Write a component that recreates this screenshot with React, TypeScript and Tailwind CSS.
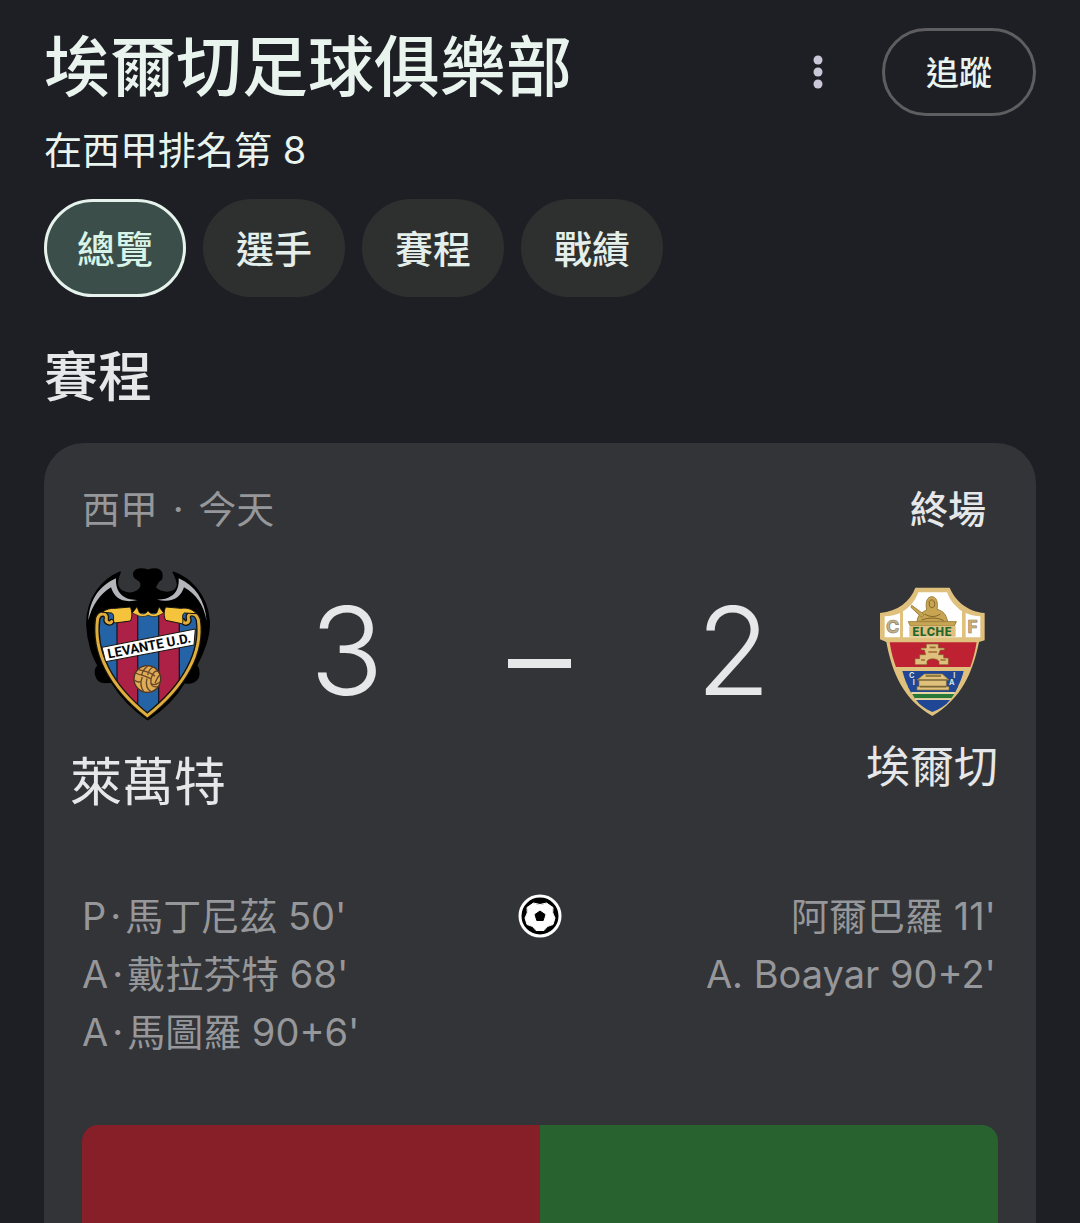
import React from 'react';

const tabs = ['總覽', '選手', '賽程', '戰績'];

const homeGoals = [
  { initial: 'P', name: "馬丁尼茲 50'" },
  { initial: 'A', name: "戴拉芬特 68'" },
  { initial: 'A', name: "馬圖羅 90+6'" },
];
const awayGoals = ["阿爾巴羅 11'", "A. Boayar 90+2'"];

function LevanteCrest() {
  return (
    <svg viewBox="48 36 378 462" className="h-[154px] w-[126px]" role="img" aria-label="Levante U.D.">
      <defs>
        <clipPath id="levante-shield">
          <path d="M84 200C84 180 100 170 128 174L345 174C374 168 392 180 392 210C392 300 352 388 235 480C128 392 84 300 84 200Z" />
        </clipPath>
      </defs>
      <path
        fill="#000"
        stroke="#000"
        strokeWidth="5"
        strokeLinejoin="round"
        d="M153 52C105 72 52 124 54 212C56 260 72 306 88 332C74 344 78 374 98 381C108 384 122 380 128 382C154 424 190 462 236 494C284 462 322 424 346 382C362 386 386 382 389 360C390 348 388 338 382 332C402 296 424 240 420 196C414 118 360 68 313 52C320 66 328 80 325 95C315 120 275 116 258 98C262 90 262 80 277 72C284 46 266 36 237 46C206 36 190 48 196 64C200 74 212 72 216 84C222 108 184 124 158 108C140 96 142 76 153 52Z"
      />
      <path fill="#b3b5ba" d="M141 70C92 92 62 132 58 196C70 150 92 118 126 97C136 130 162 146 206 135C168 136 138 116 141 70Z" />
      <path fill="#b3b5ba" d="M329 70C378 92 408 134 413 198C404 150 382 118 345 97C334 130 308 144 264 134C304 134 332 116 329 70Z" />
      <g clipPath="url(#levante-shield)">
        <rect x="80" y="160" width="64" height="330" fill="#2463a5" />
        <rect x="144" y="160" width="62" height="330" fill="#ad2146" />
        <rect x="206" y="160" width="63" height="330" fill="#2463a5" />
        <rect x="269" y="160" width="62" height="330" fill="#ad2146" />
        <rect x="331" y="160" width="66" height="330" fill="#2463a5" />
        <path d="M144 160V490M206 160V490M269 160V490M331 160V490" stroke="#16182c" strokeWidth="4" />
      </g>
      <path d="M128 200C124 208 108 202 112 190C115 176 94 170 86 190C72 290 122 392 235 482C350 392 402 290 388 194C380 170 356 172 358 188C364 204 346 210 342 198" fill="none" stroke="#17130a" strokeWidth="17" strokeLinecap="round" />
      <path d="M128 200C124 208 108 202 112 190C115 176 94 170 86 190C72 290 122 392 235 482C350 392 402 290 388 194C380 170 356 172 358 188C364 204 346 210 342 198" fill="none" stroke="#dfae3e" strokeWidth="9" strokeLinecap="round" />
      <path d="M100 172C112 162 124 160 138 160L184 156C190 170 190 188 184 198L138 204C128 200 140 180 128 174ZM290 156L336 160C352 158 368 160 382 176L346 174C334 182 348 198 338 206L290 196C284 184 284 168 290 156Z" fill="#f6c43c" stroke="#17130a" strokeWidth="3" />
      <path d="M190 174L204 156L211 173C220 180 230 178 237 167C244 178 256 180 264 173L270 156L284 174L270 181C256 188 244 184 237 180C228 186 214 186 204 180Z" fill="#f6c43c" stroke="#17130a" strokeWidth="2" />
      <path d="M99 277L379 222L375 270L110 320Z" fill="#fff" stroke="#17130a" strokeWidth="3" />
      <text
        x="241"
        y="286"
        transform="rotate(-11 242 275)"
        textAnchor="middle"
        fill="#080808"
        className="font-['Roboto'] text-[40px] font-bold"
      >
        LEVANTE U.D.
      </text>
      <circle cx="235" cy="372" r="40" fill="#dfac55" stroke="#4c3421" strokeWidth="4" />
      <path
        d="M200 354C216 362 232 362 246 372M208 344C226 348 244 350 258 364M237 332C224 342 220 348 218 360M252 336C242 342 238 350 236 360M246 372C250 352 262 344 268 350M258 384C264 370 268 362 274 358M246 372C244 390 250 400 268 394M234 370C228 392 234 402 246 410M220 366C212 384 216 398 224 410M197 376C206 382 210 382 214 380M244 384C252 392 264 388 274 380"
        fill="none"
        stroke="#68472a"
        strokeWidth="4"
      />
    </svg>
  );
}

function ElcheCrest() {
  return (
    <svg viewBox="54 48 321 393" className="h-[131px] w-[107px]" role="img" aria-label="Elche CF">
      <path d="M163 53H266C282 90 316 124 371 129V211L354 216C334 312 300 386 214 438C128 388 94 312 76 216L57 208V129C110 124 148 94 163 53Z" fill="#dfc17d" />
      <path d="M172 67H258C268 94 286 112 303 124V202H126V124C146 112 162 94 172 67Z" fill="#fff" />
      <path d="M71 139C90 138 106 134 117 129V202H71ZM314 129C326 135 342 138 358 139V202H314Z" fill="#fff" />
      <path d="M86 217H347C342 246 336 270 328 291H105C96 268 90 244 86 217Z" fill="#be2232" />
      <path d="M124 303H308C304 320 298 336 288 355H144C136 342 130 324 124 303Z" fill="#204796" />
      <path d="M140 348H292L282 368H150Z" fill="#204796" />
      <path d="M150 366H282L280 372H154Z" fill="#e6d7a5" />
      <path d="M154 372H280L271 385H161Z" fill="#28783a" />
      <path d="M161 385H271L267 390H165Z" fill="#e6d7a5" />
      <path d="M165 390H267C254 407 236 418 214 426C194 418 178 407 165 390Z" fill="#204796" />
      <g fill="#c7a552" stroke="#a08240" strokeWidth="3">
        <path d="M168 154C170 134 184 126 197 120C192 94 200 80 212 80C226 80 232 96 228 118C248 124 254 132 260 154Z" />
        <path d="M152 106L190 134L182 142L150 112Z" />
        <path d="M142 155H286L280 168H148Z" />
      </g>
      <path d="M205 94C212 84 222 92 221 104C220 116 206 116 205 104ZM192 132C206 142 224 142 238 132M182 150C202 142 232 142 248 152" fill="none" stroke="#806529" strokeWidth="3" />
      <path d="M145 169H284V200H145Z" fill="#dfc17d" />
      <text x="214" y="197" textAnchor="middle" fill="#24642f" className="font-['Inter'] text-[34px] font-extrabold tracking-wider">ELCHE</text>
      <text x="95" y="189" textAnchor="middle" fill="#c2b28c" stroke="#8c8067" strokeWidth="2" className="font-['Inter'] text-[54px] font-bold">C</text>
      <text x="335" y="190" textAnchor="middle" fill="#d5b76f" stroke="#8c8067" strokeWidth="2" className="font-['Inter'] text-[52px] font-bold">F</text>
      <path
        d="M196 222H232V234H250V240H238L232 254H248V264H262V284H234V274C228 264 202 264 198 274V284H162V266H176V254H194L190 240H180V234H196Z"
        fill="#dfc17d"
        stroke="#81622e"
        strokeWidth="2"
      />
      <path d="M206 232H224M202 246H228M180 270H192M238 270H254" stroke="#9b6a34" strokeWidth="5" />
      <path d="M190 312H244L264 330H256V350H264V360H168V350H174V330H168Z" fill="#dfc17d" stroke="#8e712f" strokeWidth="2" />
      <path d="M172 330H260M176 350H256M194 318H240" stroke="#786635" strokeWidth="5" />
      <g fill="#dce1df" textAnchor="middle" className="font-['Inter'] text-[22px] font-bold">
        <text x="152" y="323">C</text>
        <text x="158" y="346">I</text>
        <text x="280" y="323">I</text>
        <text x="272" y="346">A</text>
      </g>
    </svg>
  );
}

function BallIcon() {
  return (
    <svg viewBox="0 0 44 44" className="size-11" role="img" aria-label="進球">
      <circle cx="22" cy="22" r="20" fill="#000" stroke="#fff" strokeWidth="3" />
      <path
        d="M15.500 9Q22 12 28.500 9L35 13.500Q33.500 19 37 24L35 30.500Q28.500 31.500 26 36.500H18Q15.500 31.500 9 30.500L7 24Q10.500 19 9 13.500Z"
        fill="#fff"
        stroke="#fff"
        strokeLinejoin="round"
      />
      <path d="M22 17L27 20.500L25.200 26.500H18.800L17 20.500Z" fill="#000" stroke="#000" strokeLinejoin="round" />
    </svg>
  );
}

export default function App() {
  return (
    <main className="flex min-h-screen flex-col bg-[#1e1f24] px-11 pt-6 font-['Inter','Noto_Sans_CJK_TC',sans-serif] text-[#e6e7e9]">
      <header className="flex items-start justify-between text-[#eaf4ef]">
        <div>
          <h1 className="text-[66px] leading-[86px] font-medium">埃爾切足球俱樂部</h1>
          <p className="mt-3.5 text-[38px] leading-[52px]">在西甲排名第 8</p>
        </div>
        <div className="mt-1 flex items-center gap-11">
          <button type="button" aria-label="更多選項" className="flex h-16 w-10 items-center justify-center">
            <svg viewBox="0 0 10 34" className="h-[34px] w-2.5" fill="#c9c7d8">
              <circle cx="5" cy="5" r="4.500" />
              <circle cx="5" cy="17" r="4.500" />
              <circle cx="5" cy="29" r="4.500" />
            </svg>
          </button>
          <button type="button" className="h-[88px] rounded-full border-3 border-[#5e5e61] px-[41px] pt-1 text-[33px] font-medium">
            追蹤
          </button>
        </div>
      </header>

      <nav className="mt-[23px] flex gap-[17px]">
        {tabs.map((tab, i) => (
          <button
            key={tab}
            type="button"
            aria-pressed={i === 0}
            className={
              i === 0
                ? 'h-[98px] rounded-full border-3 border-[#e6f3ed] bg-[#3c4e49] px-[30px] pt-0.5 text-[38px] font-medium text-[#d8f3e7]'
                : 'h-[98px] rounded-full border-3 border-[#2d302f] bg-[#2d302f] px-[30px] pt-0.5 text-[38px] font-medium text-[#e4eeea]'
            }
          >
            {tab}
          </button>
        ))}
      </nav>

      <h2 className="mt-[43px] text-[54px] leading-[76px] font-medium">賽程</h2>

      <section className="mt-[27px] flex flex-1 flex-col rounded-t-[40px] bg-[#333437] px-[38px] pt-10">
        <div className="flex items-center justify-between pr-3 text-[38px] leading-[52px]">
          <p className="text-[#96979a]">
            西甲 <span className="mx-1">·</span> 今天
          </p>
          <p className="font-medium">終場</p>
        </div>

        <div className="-ml-3 mt-8 flex items-start justify-between">
          <div className="flex w-[156px] flex-col items-center">
            <LevanteCrest />
            <p className="mt-6 text-[52px] leading-[76px]">萊萬特</p>
          </div>
          <div className="grid flex-1 grid-cols-3 items-center pt-2 pr-9 pl-6 text-center text-[122px] leading-[152px] font-light">
            <span>3</span>
            <span className="mx-auto mt-6 h-[9px] w-[63px] bg-[#e6e7e9]" role="img" aria-label="–" />
            <span>2</span>
          </div>
          <div className="mt-[19px] flex w-[132px] flex-col items-center">
            <ElcheCrest />
            <p className="mt-5 text-[44px] leading-[60px]">埃爾切</p>
          </div>
        </div>

        <div className="mt-[66px] grid grid-cols-[1fr_auto_1fr] items-start text-[38px] leading-[58px] text-[#96979a]">
          <ul>
            {homeGoals.map((goal) => (
              <li key={goal.name}>
                {goal.initial}
                <span className="mx-1">·</span>
                {goal.name}
              </li>
            ))}
          </ul>
          <div className="mt-[7px]">
            <BallIcon />
          </div>
          <ul className="pr-0.5 text-right">
            {awayGoals.map((goal) => (
              <li key={goal}>{goal}</li>
            ))}
          </ul>
        </div>

        <div className="mt-16 flex min-h-24 flex-1 overflow-hidden rounded-t-2xl">
          <div className="flex-1 bg-[#871f28]" />
          <div className="flex-1 bg-[#28622e]" />
        </div>
      </section>
    </main>
  );
}
